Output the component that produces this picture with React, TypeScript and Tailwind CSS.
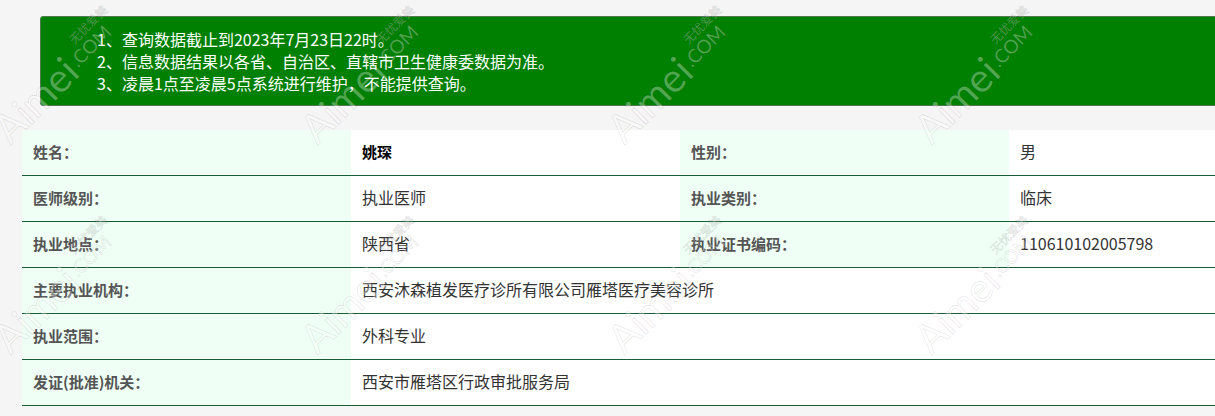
import React from "react";

const tiles: { x: number; y: number }[] = [];
for (const y of [147, 357]) {
  for (const x of [12, 319, 626, 933]) tiles.push({ x, y });
}

function Watermark({ x, y }: { x: number; y: number }) {
  return (
    <div className="absolute h-0 w-0" style={{ left: x, top: y }}>
      <div className="absolute bottom-0 left-0 origin-bottom-left -rotate-45 flex items-end whitespace-nowrap text-[rgba(255,255,255,0.32)] [-webkit-text-stroke:0.8px_rgba(0,0,0,0.1)] [font-family:Lato,'Noto_Sans_CJK_SC',sans-serif]">
        <span className="text-[40px] leading-[34px]">Aimei</span>
        <div className="flex flex-col items-start pb-[7px] pl-[2px]">
          <span className="text-[12px] leading-[14px] pl-[14px] [font-family:'Noto_Sans_CJK_SC',sans-serif]">无忧爱美</span>
          <span className="text-[19px] leading-[19px]">.COM</span>
        </div>
      </div>
    </div>
  );
}

function Label({ children }: { children: React.ReactNode }) {
  return (
    <div className="bg-[#effff6] h-[46px] border-b border-[#1a5c35] flex items-center pl-[11px] font-bold text-[#555] text-[15px]">
      {children}
    </div>
  );
}

function Value({ children, span, bold }: { children: React.ReactNode; span?: boolean; bold?: boolean }) {
  return (
    <div
      className={
        "bg-white h-[46px] border-b border-[#1a5c35] flex items-center pl-[11px] " +
        (span ? "col-span-3 " : "") +
        (bold ? "font-bold text-black text-[15px]" : "text-[#333] text-[16px] pb-[3px]")
      }
    >
      {children}
    </div>
  );
}

export default function App() {
  return (
    <div className="relative w-full min-h-[416px] overflow-hidden bg-[#f5f5f5] [font-family:'Noto_Sans_CJK_SC','Microsoft_YaHei',sans-serif]">
      <div className="w-[1360px] pt-[16px] pb-[10px]">
        <div className="ml-[40px] w-[1300px] h-[90px] rounded-[3px] border border-[#4f7a4f] bg-[#008000] pl-[56px] pt-[11px] text-white text-[16px] leading-[22px]">
          <p>1、查询数据截止到2023年7月23日22时。</p>
          <p>2、信息数据结果以各省、自治区、直辖市卫生健康委数据为准。</p>
          <p>3、凌晨1点至凌晨5点系统进行维护，不能提供查询。</p>
        </div>
        <div className="ml-[22px] mt-[24px] grid grid-cols-[329px_329px_329px_329px]">
          <Label>姓名：</Label>
          <Value bold>姚琛</Value>
          <Label>性别：</Label>
          <Value>男</Value>

          <Label>医师级别：</Label>
          <Value>执业医师</Value>
          <Label>执业类别：</Label>
          <Value>临床</Value>

          <Label>执业地点：</Label>
          <Value>陕西省</Value>
          <Label>执业证书编码：</Label>
          <Value>110610102005798</Value>

          <Label>主要执业机构：</Label>
          <Value span>西安沐森植发医疗诊所有限公司雁塔医疗美容诊所</Value>

          <Label>执业范围：</Label>
          <Value span>外科专业</Value>

          <Label>发证(批准)机关：</Label>
          <Value span>西安市雁塔区行政审批服务局</Value>
        </div>
      </div>
      <div className="pointer-events-none absolute inset-0">
        {tiles.map((t, i) => (
          <Watermark key={i} x={t.x} y={t.y} />
        ))}
      </div>
    </div>
  );
}
